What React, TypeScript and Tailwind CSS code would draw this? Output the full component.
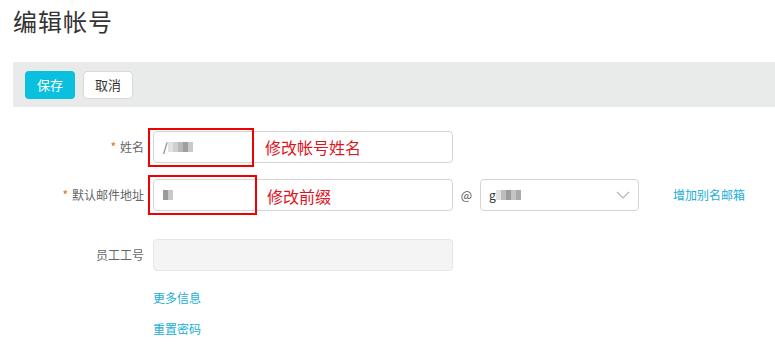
import * as React from "react";

const font = { fontFamily: '"Noto Sans CJK SC", "Noto Sans", sans-serif' };

function Mosaic({ cells }: { cells: string[] }) {
    return (
        <span className="inline-flex items-center">
            {cells.map((c, i) => (
                <span key={i} className={`inline-block w-[5px] h-[10px] ${c}`} />
            ))}
        </span>
    );
}

function Label({ text, required }: { text: string; required?: boolean }) {
    return (
        <div className="w-[153px] shrink-0 pr-[9px] text-right text-[12px] text-[#666]">
            {required && <span className="text-[#f56a00] mr-[4px]">*</span>}
            {text}
        </div>
    );
}

export default function App() {
    return (
        <div className="w-[775px] h-[357px] bg-white overflow-hidden relative" style={font}>
            <h1 className="pl-[13px] pt-[4px] text-[24px] leading-[34px] text-[#333] tracking-[1px]">编辑帐号</h1>

            <div className="ml-[13px] mt-[24px] h-[45px] bg-[#e9eaea] flex items-center gap-[8px] pl-[12px]">
                <button className="w-[50px] h-[28px] rounded-[4px] bg-[#0ac0de] text-white text-[13px]">保存</button>
                <button className="w-[50px] h-[28px] rounded-[4px] bg-white border border-[#d9d9d9] text-[#333] text-[13px]">取消</button>
            </div>

            <div className="mt-[24px] flex flex-col">
                <div className="flex items-center h-[32px]">
                    <Label text="姓名" required />
                    <div className="relative w-[300px] h-[32px] rounded-[4px] border border-[#d4d4d4] flex items-center pl-[9px] text-[12px] text-[#555]">
                        <span>/</span>
                        <Mosaic cells={["bg-[#e2e2e2]", "bg-[#cfcfcf]", "bg-[#b8b8b8]", "bg-[#9e9e9e]", "bg-[#c9c9c9]"]} />
                        <div className="absolute left-[-6px] top-[-4px] w-[106px] h-[39px] border-2 border-[#f00000]" />
                        <span className="absolute left-[111px] top-[3px] text-[16px] text-[#e0141e]">修改帐号姓名</span>
                    </div>
                </div>

                <div className="flex items-center h-[32px] mt-[16px]">
                    <Label text="默认邮件地址" required />
                    <div className="relative w-[300px] h-[32px] rounded-[4px] border border-[#d4d4d4] flex items-center pl-[9px] text-[12px] text-[#555]">
                        <Mosaic cells={["bg-[#9a9a9a]", "bg-[#c8c8c8]"]} />
                        <div className="absolute left-[-6px] top-[-5px] w-[109px] h-[40px] border-2 border-[#f00000]" />
                        <span className="absolute left-[113px] top-[4px] text-[16px] text-[#e0141e]">修改前缀</span>
                    </div>
                    <span className="w-[27px] text-center text-[12px] text-[#555]">@</span>
                    <div className="w-[159px] h-[32px] rounded-[4px] border border-[#d4d4d4] flex items-center pl-[8px] pr-[8px] text-[12px] text-[#333]">
                        <span>g</span>
                        <Mosaic cells={["bg-[#e0e0e0]", "bg-[#bdbdbd]", "bg-[#9b9b9b]", "bg-[#c4c4c4]", "bg-[#aaaaaa]"]} />
                        <svg className="ml-auto" width="14" height="8" viewBox="0 0 14 8" fill="none">
                            <path d="M1 1l6 6 6-6" stroke="#b5b5b5" strokeWidth="1.2" />
                        </svg>
                    </div>
                    <a className="ml-[34px] text-[12px] text-[#1aaed6]">增加别名邮箱</a>
                </div>

                <div className="flex items-center h-[32px] mt-[28px]">
                    <Label text="员工工号" />
                    <div className="w-[300px] h-[32px] rounded-[4px] border border-[#e6e6e6] bg-[#f4f4f4]" />
                </div>

                <a className="ml-[153px] mt-[18px] text-[12px] leading-[18px] text-[#1aaed6]">更多信息</a>
                <a className="ml-[153px] mt-[13px] text-[12px] leading-[18px] text-[#1aaed6]">重置密码</a>
            </div>
        </div>
    );
}
